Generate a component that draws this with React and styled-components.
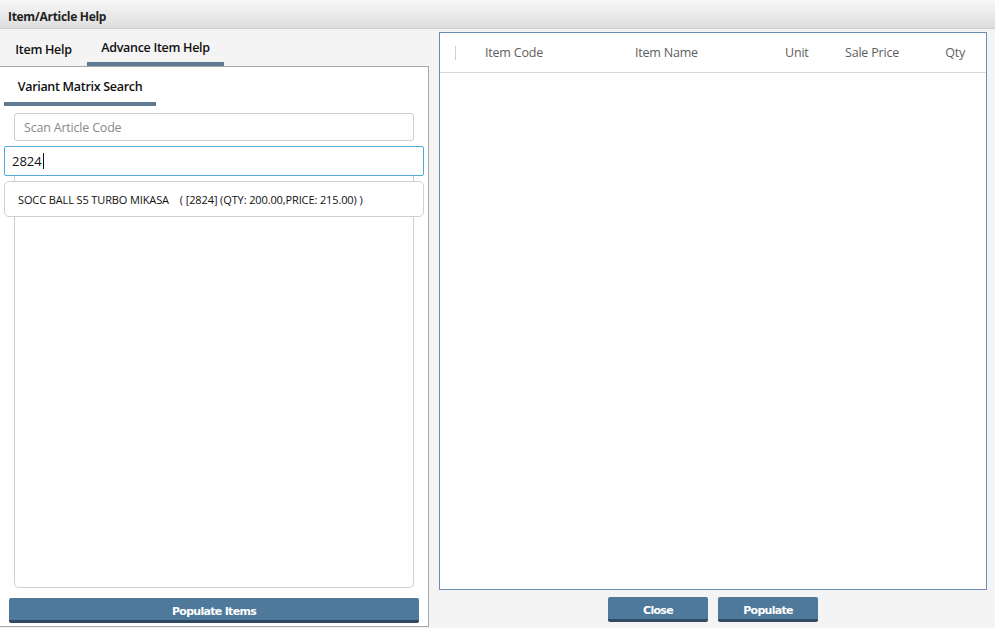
import React from "react";
import styled, { createGlobalStyle } from "styled-components";

const Global = createGlobalStyle`
  html, body { margin: 0; padding: 0; }
  body { background: #f4f4f4; font-family: "Open Sans", "Noto Sans", sans-serif; color: #222; }
  * { box-sizing: border-box; }
`;

const Page = styled.div`
  width: 995px;
  height: 628px;
  display: flex;
  flex-direction: column;
  background: #f4f4f4;
  overflow: hidden;
`;

const TitleBar = styled.div`
  height: 29px;
  flex: none;
  display: flex;
  align-items: center;
  padding: 5px 8px 0;
  background: linear-gradient(#f7f7f7, #dedede);
  border-bottom: 1px solid #d0d0d0;
  font-size: 12px;
  font-weight: 700;
  letter-spacing: -0.3px;
  color: #222;
`;

const Body = styled.div`
  flex: 1;
  display: flex;
  min-height: 0;
`;

const LeftPane = styled.div`
  width: 429px;
  flex: none;
  display: flex;
  flex-direction: column;
`;

const Tabs = styled.div`
  height: 37px;
  flex: none;
  display: flex;
  align-items: stretch;
`;

const Tab = styled.div`
  display: flex;
  align-items: center;
  justify-content: center;
  padding: ${(p) => (p.$active ? "3px 0 0" : "7px 0 0")};
  width: ${(p) => p.$w}px;
  font-size: 12.5px;
  font-weight: 600;
  letter-spacing: -0.3px;
  color: #111;
  border-bottom: ${(p) => (p.$active ? "4px solid #5f7a93" : "4px solid transparent")};
`;

const LeftBox = styled.div`
  flex: 1;
  background: #fff;
  border: 1px solid #a8a8a8;
  border-left: none;
  margin-bottom: 1px;
  display: flex;
  flex-direction: column;
  padding: 0 4px 0 4px;
  position: relative;
`;

const SubTab = styled.div`
  width: 152px;
  height: 39px;
  flex: none;
  display: flex;
  align-items: center;
  justify-content: center;
  padding-top: 4px;
  font-size: 12.5px;
  font-weight: 600;
  letter-spacing: -0.3px;
  color: #111;
  border-bottom: 4px solid #5f7a93;
`;

const ScanInput = styled.div`
  margin: 7px 10px 0;
  height: 28px;
  border: 1px solid #cfcfcf;
  border-radius: 3px;
  display: flex;
  align-items: center;
  padding: 0 9px;
  font-size: 12.5px;
  color: #8a8a8a;
  letter-spacing: -0.2px;
  background: #fff;
`;

const SearchInput = styled.div`
  margin-top: 5px;
  height: 30px;
  border: 1px solid #52a8d6;
  border-radius: 2px;
  display: flex;
  align-items: center;
  padding: 0 7px;
  font-size: 13px;
  color: #111;
  background: #fff;
  position: relative;
  z-index: 2;
`;

const Caret = styled.span`
  display: inline-block;
  width: 1px;
  height: 16px;
  background: #111;
  margin-left: 1px;
`;

const ListArea = styled.div`
  position: relative;
  flex: 1;
  margin: 0 10px 0;
  display: flex;
  flex-direction: column;
`;

const ListBox = styled.div`
  flex: 1;
  border: 1px solid #cfcfcf;
  border-top: none;
  border-radius: 0 0 5px 5px;
  margin-top: -1px;
`;

const Suggest = styled.div`
  position: absolute;
  top: 5px;
  left: -10px;
  right: -10px;
  height: 36px;
  border: 1px solid #d0d0d0;
  border-radius: 5px;
  background: #fff;
  display: flex;
  align-items: center;
  padding: 0 13px;
  font-size: 11px;
  color: #111;
  letter-spacing: -0.12px;
  white-space: pre;
`;

const BottomBar = styled.div`
  height: 38px;
  flex: none;
  display: flex;
  align-items: flex-start;
  justify-content: ${(p) => (p.$center ? "center" : "stretch")};
  gap: 10px;
  padding: ${(p) => (p.$center ? "7px 0 0" : "10px 5px 0")};
`;

const Button = styled.div`
  height: 25px;
  width: ${(p) => (p.$w ? `${p.$w}px` : "100%")};
  background: #4e799b;
  border-radius: 2px;
  border-bottom: 3px solid #2f4a62;
  display: flex;
  align-items: center;
  justify-content: center;
  padding-top: 4px;
  font-family: "DejaVu Sans", Verdana, sans-serif;
  font-size: 11px;
  font-weight: 700;
  letter-spacing: -0.7px;
  color: #fff;
`;

const RightPane = styled.div`
  flex: 1;
  display: flex;
  flex-direction: column;
  padding: 3px 8px 0 10px;
`;

const Grid = styled.div`
  flex: 1;
  background: #fff;
  border: 1px solid #6a8db3;
  display: flex;
  flex-direction: column;
`;

const Header = styled.div`
  height: 40px;
  flex: none;
  display: grid;
  grid-template-columns: 30px 150px 150px 60px 98px 1fr;
  align-items: center;
  border-bottom: 1px solid #d8d8d8;
  padding-left: 15px;
  font-size: 12.5px;
  color: #5e5e5e;
  letter-spacing: -0.2px;
`;

const Sep = styled.div`
  width: 1px;
  height: 14px;
  background: #d0d0d0;
`;

const HeadCell = styled.div`
  text-align: ${(p) => p.$align || "left"};
  padding-right: ${(p) => p.$pr || 0}px;
`;

export default function App() {
  return (
    <Page>
      <Global />
      <TitleBar>Item/Article Help</TitleBar>
      <Body>
        <LeftPane>
          <Tabs>
            <Tab $w={87}>Item Help</Tab>
            <Tab $w={137} $active>Advance Item Help</Tab>
          </Tabs>
          <LeftBox>
            <SubTab>Variant Matrix Search</SubTab>
            <ScanInput>Scan Article Code</ScanInput>
            <SearchInput>
              2824<Caret />
            </SearchInput>
            <ListArea>
              <ListBox />
              <Suggest>{"SOCC BALL S5 TURBO MIKASA    ( [2824] (QTY: 200.00,PRICE: 215.00) )"}</Suggest>
            </ListArea>
            <BottomBar>
              <Button>Populate Items</Button>
            </BottomBar>
          </LeftBox>
        </LeftPane>
        <RightPane>
          <Grid>
            <Header>
              <Sep />
              <HeadCell>Item Code</HeadCell>
              <HeadCell>Item Name</HeadCell>
              <HeadCell>Unit</HeadCell>
              <HeadCell>Sale Price</HeadCell>
              <HeadCell $align="right" $pr={21}>Qty</HeadCell>
            </Header>
          </Grid>
          <BottomBar $center>
            <Button $w={100}>Close</Button>
            <Button $w={100}>Populate</Button>
          </BottomBar>
        </RightPane>
      </Body>
    </Page>
  );
}
